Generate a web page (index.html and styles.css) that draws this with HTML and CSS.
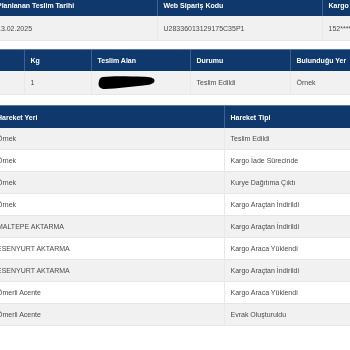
FILE: index.html
```html
<!DOCTYPE html>
<html lang="tr">
<head>
  <meta charset="UTF-8" />
  <title>Kargo Takip</title>
  <link rel="stylesheet" href="styles.css">
</head>
<body>

<div class="page">

  <table class="grid grid-summary">
    <colgroup>
      <col style="width:166px">
      <col style="width:165px">
      <col style="width:130px">
    </colgroup>
    <thead>
      <tr>
        <th>Planlanan Teslim Tarihi</th>
        <th>Web Sipariş Kodu</th>
        <th>Kargo Takip No</th>
      </tr>
    </thead>
    <tbody>
      <tr>
        <td>13.02.2025</td>
        <td>U28336013129175C35P1</td>
        <td>152*******</td>
      </tr>
    </tbody>
  </table>

  <table class="grid grid-delivery">
    <colgroup>
      <col style="width:33px">
      <col style="width:67px">
      <col style="width:99px">
      <col style="width:100px">
      <col style="width:120px">
    </colgroup>
    <thead>
      <tr>
        <th></th>
        <th>Kg</th>
        <th>Teslim Alan</th>
        <th>Durumu</th>
        <th>Bulunduğu Yer</th>
      </tr>
    </thead>
    <tbody>
      <tr>
        <td></td>
        <td>1</td>
        <td>
          <svg class="redacted" width="58" height="15" viewBox="0 0 58 15">
            <path d="M5 2 C16 0.8 32 1.4 45 1.8 C51 1.8 57 2.6 56.5 6 C56 9 51 10 45 10.5 C33 11.6 19 13.6 7 14 C2 14 0.3 11.5 0.6 8 C0.9 4.5 2.2 2.4 5 2 Z" fill="#000"/>
          </svg>
        </td>
        <td>Teslim Edildi</td>
        <td>Örnek</td>
      </tr>
    </tbody>
  </table>

  <table class="grid grid-moves">
    <colgroup>
      <col style="width:233px">
      <col style="width:140px">
    </colgroup>
    <thead>
      <tr>
        <th>Hareket Yeri</th>
        <th>Hareket Tipi</th>
      </tr>
    </thead>
    <tbody>
      <tr><td>Örnek</td><td>Teslim Edildi</td></tr>
      <tr><td>Örnek</td><td>Kargo İade Sürecinde</td></tr>
      <tr><td>Örnek</td><td>Kurye Dağıtıma Çıktı</td></tr>
      <tr><td>Örnek</td><td>Kargo Araçtan İndirildi</td></tr>
      <tr><td>MALTEPE AKTARMA</td><td>Kargo Araçtan İndirildi</td></tr>
      <tr><td>ESENYURT AKTARMA</td><td>Kargo Araca Yüklendi</td></tr>
      <tr><td>ESENYURT AKTARMA</td><td>Kargo Araçtan İndirildi</td></tr>
      <tr><td>Ömerli Acente</td><td>Kargo Araca Yüklendi</td></tr>
      <tr><td>Ömerli Acente</td><td>Evrak Oluşturuldu</td></tr>
    </tbody>
  </table>

</div>

</body>
</html>
```

FILE: styles.css
```css
body {
  font-family: 'Liberation Sans', Arial, Helvetica, sans-serif;
  background: #fff;
  margin: 0; padding: 0;
  color: #4a4a4a;
  overflow: hidden;
}
.page {
  margin: -5px 0 0 -9px;
  display: flex;
  flex-direction: column;
  align-items: flex-start;
  will-change: transform;
}
.grid {
  border-collapse: collapse;
  table-layout: fixed;
  font-size: 7px;
}
.grid th {
  background: #0f396d;
  color: white;
  font-weight: bold;
  text-align: left;
  padding: 0 6px;
  height: 22px;
  border-left: 1px solid #3d6193;
  border-top: 1px solid #5a7aa5;
  white-space: nowrap;
}
.grid th:first-child {
  border-left: none;
}
.grid td {
  padding: 0 6px;
  height: 21px;
  color: #4a4a4a;
  border-left: 1px solid #e9e9e9;
  border-bottom: 1px solid #e6e6e6;
  white-space: nowrap;
}
.grid td:first-child {
  border-left: none;
}
.grid tbody tr:nth-child(odd) td {
  background: #f1f1f1;
}

.grid-summary {
  width: 461px;
  margin-bottom: 8px;
}
.grid-summary th {
  height: 21px;
  border-top: none;
}
.grid-summary td {
  height: 24px;
}

.grid-delivery {
  width: 419px;
  margin-bottom: 10px;
}
.grid-delivery th {
  height: 21px;
}
.grid-delivery td {
  height: 23px;
}

.grid-moves {
  width: 373px;
}

.redacted {
  display: block;
}
```
